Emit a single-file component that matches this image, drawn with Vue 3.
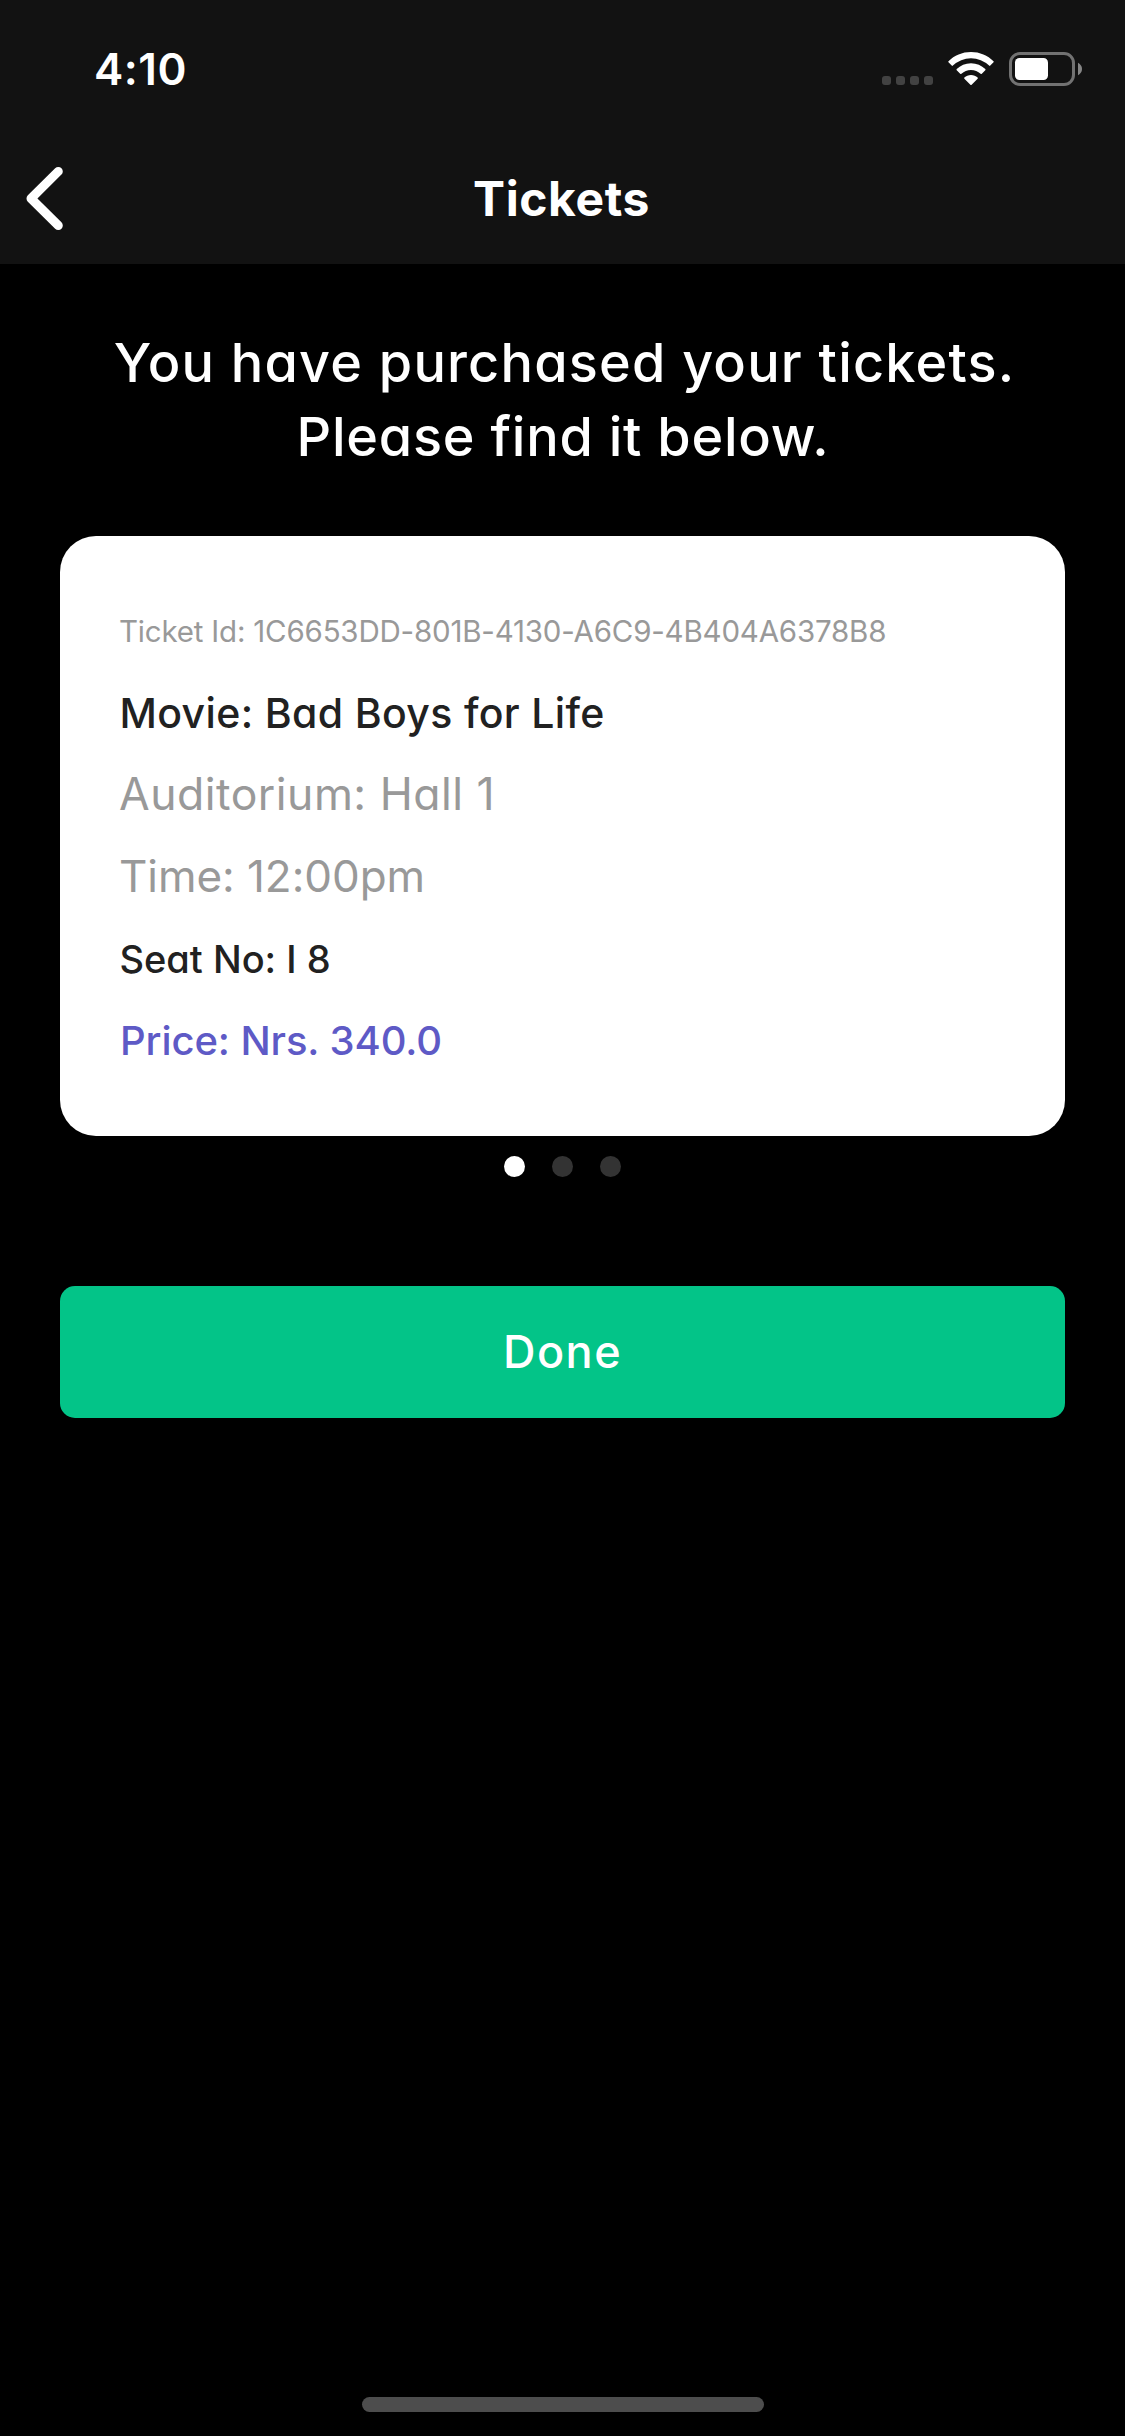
<script setup>
import { ref } from 'vue'

const details = [
  { kind: 'ticket-id', text: 'Ticket Id: 1C6653DD-801B-4130-A6C9-4B404A6378B8' },
  { kind: 'movie', text: 'Movie: Bad Boys for Life' },
  { kind: 'hall', text: 'Auditorium: Hall 1' },
  { kind: 'time', text: 'Time: 12:00pm' },
  { kind: 'seat', text: 'Seat No: I 8' },
  { kind: 'price', text: 'Price: Nrs. 340.0' }
]
const active = ref(0)
</script>

<template>
  <div class="screen">
    <header class="top">
      <div class="status">
        <span class="clock">4:10</span>
        <div class="indicators">
          <div class="signal"><i v-for="n in 4" :key="n"></i></div>
          <svg class="wifi" width="46" height="34" viewBox="0 0 46 34">
            <g fill="#fff">
              <path d="M23 0C31.800 0 39.700 3.400 45.500 9.200Q46 9.800 45.500 10.300L42.300 13.600Q41.700 14.200 41.100 13.600A26 26 0 0 0 4.900 13.600Q4.300 14.200 3.700 13.600L0.500 10.300Q0 9.800 0.500 9.200C6.300 3.400 14.200 0 23 0Z" />
              <path d="M23 11.300C28.600 11.300 33.600 13.500 37.300 17.100Q37.800 17.700 37.300 18.200L33.800 21.800Q33.200 22.400 32.600 21.800A14 14 0 0 0 13.400 21.800Q12.800 22.400 12.200 21.800L8.700 18.200Q8.200 17.700 8.700 17.100C12.400 13.500 17.400 11.300 23 11.300Z" />
              <path d="M23 22.900C25.500 22.900 27.900 23.900 29.600 25.500Q30.100 26.100 29.600 26.700L23.600 32.700Q23 33.200 22.400 32.700L16.400 26.700Q15.900 26.100 16.400 25.500C18.100 23.900 20.500 22.900 23 22.900Z" />
            </g>
          </svg>
          <svg class="battery" width="73" height="34" viewBox="0 0 73 34">
            <rect x="1.500" y="1.500" width="63" height="31" rx="9.500" fill="none" stroke="#727272" stroke-width="3" />
            <rect x="6" y="6" width="33" height="22" rx="4.500" fill="#fff" />
            <path d="M69 10.800Q73 13 73 17T69 23.200Z" fill="#868686" />
          </svg>
        </div>
      </div>
      <nav class="nav">
        <svg class="back" width="60" height="82" viewBox="0 0 60 82">
          <path d="M58.300 14.400L31 41.500L58.300 68.500" fill="none" stroke="#fff" stroke-width="9" stroke-linecap="round" stroke-linejoin="round" />
        </svg>
        <h1>Tickets</h1>
        <span class="spacer"></span>
      </nav>
    </header>

    <main>
      <p class="message">
        <span class="first">You have purchased your tickets.</span>
        <span class="second">Please find it below.</span>
      </p>
      <section class="card">
        <div v-for="row in details" :key="row.kind" :class="['row', row.kind]">{{ row.text }}</div>
      </section>
      <div class="pager">
        <i v-for="n in 3" :key="n" :class="{ on: n - 1 === active }" @click="active = n - 1"></i>
      </div>
      <button class="done"><span>Done</span></button>
    </main>
    <div class="home"></div>
  </div>
</template>

<style>
body {
  margin: 0;
  background: #000;
}
</style>

<style scoped>
.screen {
  box-sizing: border-box;
  display: flex;
  flex-direction: column;
  width: 1125px;
  height: 2436px;
  overflow: hidden;
  padding-bottom: 24px;
  background: #000;
  color: #fff;
  font-family: "Inter", sans-serif;
  font-feature-settings: "cv11";
}
.top {
  height: 264px;
  background: #121212;
}
.status {
  display: flex;
  justify-content: space-between;
  height: 132px;
}
.clock {
  padding: 39px 0 0 94px;
  font-size: 44px;
  font-weight: 600;
  line-height: 60px;
  letter-spacing: 0.5px;
}
.indicators {
  display: flex;
  align-items: flex-start;
  padding: 52px 43px 0 0;
}
.signal {
  display: flex;
  gap: 5px;
  margin: 24px 15px 0 0;
}
.signal i {
  width: 9px;
  height: 9px;
  border-radius: 3px;
  background: #424242;
}
.battery {
  margin-left: 15px;
}
.nav {
  display: flex;
  align-items: center;
  justify-content: space-between;
  height: 132px;
}
.back {
  overflow: visible;
}
.nav h1 {
  margin: 2px 2px 0 0;
  font-size: 48px;
  font-weight: 700;
  line-height: 60px;
  letter-spacing: 0.6px;
}
.spacer {
  width: 60px;
}
main {
  flex: 1;
  padding: 62px 60px 0;
}
.message {
  display: flex;
  flex-direction: column;
  align-items: center;
  margin: 0;
  font-size: 54px;
  font-weight: 500;
  line-height: 74px;
  white-space: nowrap;
}
.first {
  padding-left: 4px;
  letter-spacing: 1.2px;
}
.second {
  padding-left: 1px;
  letter-spacing: 0.75px;
}
.card {
  box-sizing: border-box;
  height: 600px;
  margin-top: 62px;
  padding: 54px 60px 0;
  border-radius: 36px;
  background: #fff;
}
.row {
  height: 82px;
  line-height: 82px;
  white-space: nowrap;
}
.ticket-id {
  margin-left: -1px;
  color: #999;
  font-size: 29.5px;
  letter-spacing: -0.2px;
}
.movie {
  margin-left: -0.5px;
  color: #212121;
  font-size: 41px;
  font-weight: 500;
  letter-spacing: 0.35px;
}
.hall,
.time {
  margin-left: -1px;
  color: #999;
}
.hall {
  height: 80px;
  font-size: 44.5px;
  line-height: 80px;
  letter-spacing: 0.5px;
}
.time {
  height: 84px;
  font-size: 44px;
  line-height: 84px;
  letter-spacing: -0.05px;
}
.seat {
  margin-left: -0.5px;
  color: #212121;
  font-size: 38px;
  font-weight: 500;
}
.price {
  color: #5e5ac6;
  font-size: 40px;
  font-weight: 500;
  letter-spacing: -0.1px;
}
.pager {
  display: flex;
  justify-content: center;
  gap: 27px;
  padding: 20px 1px 0 0;
}
.pager i {
  width: 21px;
  height: 21px;
  border-radius: 50%;
  background: #333;
}
.pager .on {
  background: #fff;
}
.done {
  display: block;
  width: 100%;
  height: 132px;
  margin: 109px 0 0;
  padding: 0;
  border: 0;
  border-radius: 15px;
  background: #03c488;
  color: #fff;
  font: 500 45px/132px "Inter", sans-serif;
  letter-spacing: 1.5px;
}
.home {
  flex: none;
  align-self: center;
  width: 402px;
  height: 15px;
  border-radius: 8px;
  background: #4d4d4d;
}
</style>
